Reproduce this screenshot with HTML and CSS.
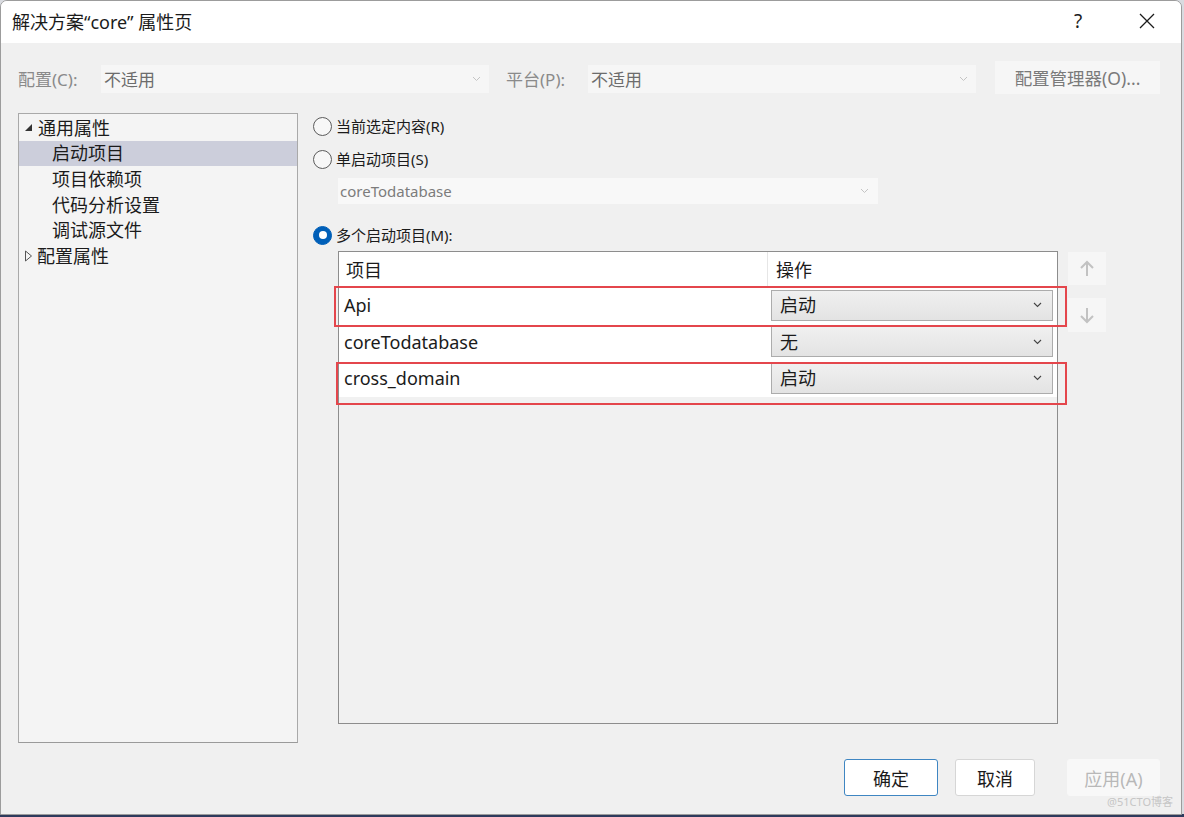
FILE: index.html
```html
<!DOCTYPE html>
<html lang="zh-CN">
<head>
<meta charset="utf-8">
<title>解决方案“core” 属性页</title>
<link rel="stylesheet" href="styles.css">
</head>
<body>
<div class="dialog">
  <div class="titlebar">
    <div class="title">解决方案“core” 属性页</div>
    <div class="title-btns">
      <span class="help">?</span>
      <span class="close"><svg width="16" height="16" viewBox="0 0 16 16"><path d="M1 1 L15 15 M15 1 L1 15" stroke="#1b1b1b" stroke-width="1.3" fill="none"/></svg></span>
    </div>
  </div>

  <div class="config-row">
    <span class="cfg-label">配置(C):</span>
    <div class="select select-disabled">
      <span>不适用</span>
      <svg class="chev" width="9" height="6" viewBox="0 0 9 6"><path d="M1 1 L4.5 4.5 L8 1" stroke="#c4c4c4" stroke-width="1" fill="none"/></svg>
    </div>
    <span class="cfg-label cfg-label-2">平台(P):</span>
    <div class="select select-disabled">
      <span>不适用</span>
      <svg class="chev" width="9" height="6" viewBox="0 0 9 6"><path d="M1 1 L4.5 4.5 L8 1" stroke="#c4c4c4" stroke-width="1" fill="none"/></svg>
    </div>
    <button class="cfg-mgr">配置管理器(O)...</button>
  </div>

  <div class="main">
    <div class="tree">
      <div class="tree-item root"><svg class="tw" width="9" height="9" viewBox="0 0 9 9"><path d="M8 1 L8 8 L1 8 Z" fill="#333"/></svg><span>通用属性</span></div>
      <div class="tree-item child selected">启动项目</div>
      <div class="tree-item child">项目依赖项</div>
      <div class="tree-item child">代码分析设置</div>
      <div class="tree-item child">调试源文件</div>
      <div class="tree-item root"><svg class="tw" width="9" height="12" viewBox="0 0 9 12"><path d="M1.5 1 L7.5 6 L1.5 11 Z" fill="none" stroke="#555" stroke-width="1"/></svg><span>配置属性</span></div>
    </div>

    <div class="right">
      <div class="radio-row">
        <span class="radio"></span>
        <span class="radio-label">当前选定内容(R)</span>
      </div>
      <div class="radio-row r2">
        <span class="radio"></span>
        <span class="radio-label">单启动项目(S)</span>
      </div>
      <div class="single-select">
        <span>coreTodatabase</span>
        <svg class="chev" width="9" height="6" viewBox="0 0 9 6"><path d="M1 1 L4.5 4.5 L8 1" stroke="#c4c4c4" stroke-width="1" fill="none"/></svg>
      </div>
      <div class="radio-row r3">
        <span class="radio checked"></span>
        <span class="radio-label">多个启动项目(M):</span>
      </div>

      <div class="table-area">
        <div class="table-wrap">
          <div class="grid">
            <div class="row head">
              <div class="c1">项目</div>
              <div class="c2 head-c2">操作</div>
            </div>
            <div class="row">
              <div class="c1">Api</div>
              <div class="c2"><div class="combo"><span>启动</span><svg width="9" height="6" viewBox="0 0 9 6"><path d="M1 1 L4.5 4.5 L8 1" stroke="#444" stroke-width="1.1" fill="none"/></svg></div></div>
            </div>
            <div class="row">
              <div class="c1">coreTodatabase</div>
              <div class="c2"><div class="combo"><span>无</span><svg width="9" height="6" viewBox="0 0 9 6"><path d="M1 1 L4.5 4.5 L8 1" stroke="#444" stroke-width="1.1" fill="none"/></svg></div></div>
            </div>
            <div class="row">
              <div class="c1">cross_domain</div>
              <div class="c2"><div class="combo"><span>启动</span><svg width="9" height="6" viewBox="0 0 9 6"><path d="M1 1 L4.5 4.5 L8 1" stroke="#444" stroke-width="1.1" fill="none"/></svg></div></div>
            </div>
          </div>
          <div class="mark mark-1"></div>
          <div class="mark mark-2"></div>
        </div>
        <div class="move-btns">
          <div class="move-btn"><svg width="16" height="18" viewBox="0 0 16 18"><path d="M8 16 L8 2 M2 8 L8 2 L14 8" stroke="#c2c2c2" stroke-width="2" fill="none"/></svg></div>
          <div class="move-btn down"><svg width="16" height="18" viewBox="0 0 16 18"><path d="M8 2 L8 16 M2 10 L8 16 L14 10" stroke="#c2c2c2" stroke-width="2" fill="none"/></svg></div>
        </div>
      </div>
    </div>
  </div>

  <div class="footer">
    <button class="btn btn-ok">确定</button>
    <button class="btn btn-cancel">取消</button>
    <button class="btn btn-apply">应用(A)</button>
  </div>
  <div class="watermark">@51CTO博客</div>
</div>
</body>
</html>
```

FILE: styles.css
```css
* { box-sizing: border-box; }

html, body {
  margin: 0;
  padding: 0;
}

body {
  width: 1184px;
  height: 817px;
  overflow: hidden;
  background: linear-gradient(#d9dbe0 0, #d9dbe0 814px, #2e3a5c 814px);
  font-family: "Noto Sans", "Noto Sans CJK SC", sans-serif;
  color: #1b1b1b;
}

.dialog {
  position: relative;
  width: 1182px;
  height: 815px;
  background: #f0f0f0;
  border: 1px solid #9c9c9c;
  border-radius: 7px 7px 0 0;
  overflow: hidden;
  display: flex;
  flex-direction: column;
}

/* Title bar */
.titlebar {
  height: 42px;
  background: #ffffff;
  display: flex;
  align-items: center;
  justify-content: space-between;
  padding-left: 11px;
}

.title {
  font-size: 18px;
  line-height: 24px;
  color: #1b1b1b;
  margin-top: -1px;
}

.title-btns {
  display: flex;
  align-items: center;
  height: 100%;
}

.help {
  font-size: 19px;
  line-height: 24px;
  width: 20px;
  text-align: center;
  margin-right: 51px;
  margin-top: -3px;
}

.close {
  display: flex;
  width: 16px;
  height: 16px;
  margin-right: 26px;
  margin-top: -2px;
}

/* Config row */
.config-row {
  display: flex;
  align-items: center;
  height: 33px;
  margin-top: 18px;
  padding-left: 17px;
}

.cfg-label {
  width: 83px;
  font-size: 17px;
  line-height: 24px;
  color: #8a8a8a;
  margin-top: 4px;
}

.cfg-label-2 {
  width: 82px;
  margin-left: 17px;
}

.select {
  width: 388px;
  height: 28px;
  margin-top: 3px;
  display: flex;
  align-items: center;
  justify-content: space-between;
  padding: 0 8px 0 3px;
  background: #f6f6f6;
  font-size: 17px;
  line-height: 24px;
  color: #6c6c6c;
}

.select span { margin-top: 1px; }
.select .chev { margin-top: 0; }

.cfg-mgr {
  margin-left: 19px;
  width: 165px;
  height: 33px;
  border: none;
  background: #f6f6f6;
  font-family: inherit;
  font-size: 17.5px;
  color: #7a7a7a;
  padding: 0;
  margin-top: 0;
}

/* Main area */
.main {
  display: flex;
  align-items: flex-start;
  margin-top: 18px;
  padding-left: 17px;
}

.tree {
  width: 280px;
  height: 630px;
  margin-top: 1px;
  background: #f4f4f4;
  border: 1px solid #a9a9a9;
  border-bottom-color: #9a9a9a;
  padding-top: 1px;
}

.tree-item {
  height: 25.6px;
  display: flex;
  align-items: center;
  font-size: 18px;
  line-height: 24px;
  white-space: nowrap;
}

.tree-item.root { padding-left: 5px; }
.tree-item.root .tw { margin-right: 5px; flex: none; }
.tree-item.root:last-child .tw { margin-right: 4px; }
.tree-item.child { padding-left: 33px; }
.tree-item.selected { background: #cccedb; }

.right {
  margin-left: 15px;
  display: flex;
  flex-direction: column;
}

.radio-row {
  display: flex;
  align-items: center;
  height: 28px;
}

.radio-row.r2 { margin-top: 5px; }
.radio-row.r3 { margin-top: 17px; }

.radio {
  width: 19px;
  height: 19px;
  border-radius: 50%;
  border: 1px solid #5b5b5b;
  background: #f7f7f7;
  margin-right: 4px;
  flex: none;
  position: relative;
}

.radio.checked {
  background: #005fb8;
  border-color: #005fb8;
}

.radio.checked::after {
  content: "";
  position: absolute;
  left: 4.5px;
  top: 4.5px;
  width: 8px;
  height: 8px;
  border-radius: 50%;
  background: #ffffff;
}

.radio-label {
  font-size: 15px;
  line-height: 20px;
  color: #1b1b1b;
  margin-top: -1px;
}

.single-select {
  margin-top: 5px;
  margin-left: 25px;
  width: 540px;
  height: 26px;
  background: #f8f8f8;
  display: flex;
  align-items: center;
  justify-content: space-between;
  padding: 0 9px 0 2px;
  font-size: 15px;
  color: #7c7c7c;
}

/* Table */
.table-area {
  display: flex;
  margin-top: 2px;
  margin-left: 25px;
}

.table-wrap {
  position: relative;
  width: 720px;
  height: 473px;
  border: 1px solid #8d8d8d;
  background: #f1f1f1;
}

.row {
  display: flex;
  height: 36.5px;
  background: #ffffff;
  font-size: 18px;
  line-height: 24px;
}

.row.head { height: 35px; }

.c1 {
  width: 429px;
  display: flex;
  align-items: center;
  padding-left: 5px;
}

.row.head .c1 {
  padding-left: 7px;
  border-right: 1px solid #e6e6e6;
}

.c2 {
  flex: 1;
  display: flex;
  align-items: center;
  padding: 0 4px 0 3px;
}

.head-c2 { padding-left: 8px; }

.combo {
  width: 100%;
  height: 31px;
  display: flex;
  align-items: center;
  justify-content: space-between;
  padding: 0 10px 0 8px;
  background: linear-gradient(#f0f0f0, #e3e3e3);
  border: 1px solid #acacac;
}

.mark {
  position: absolute;
  border: 2px solid #e4464c;
  pointer-events: none;
}

.mark-1 { left: -5px; top: 34px; width: 733px; height: 41px; }
.mark-2 { left: -3px; top: 110px; width: 731px; height: 43px; }

.move-btns {
  margin-left: 10px;
  display: flex;
  flex-direction: column;
}

.move-btn {
  width: 38px;
  height: 33px;
  margin-top: 1px;
  background: #f6f6f6;
  display: flex;
  align-items: center;
  justify-content: center;
}

.move-btn.down { margin-top: 13px; height: 34px; }

/* Footer */
.footer {
  display: flex;
  justify-content: flex-end;
  margin-top: 16px;
  padding-right: 21px;
}

.btn {
  height: 37px;
  font-family: inherit;
  font-size: 18px;
  padding: 0;
  border-radius: 3px;
  color: #1b1b1b;
}

.btn-ok {
  width: 94px;
  background: #ffffff;
  border: 1px solid #3f86c2;
}

.btn-cancel {
  width: 80px;
  margin-left: 17px;
  background: #ffffff;
  border: 1px solid #d6d6d6;
}

.btn-apply {
  width: 93px;
  margin-left: 32px;
  background: #f8f8f8;
  border: 1px solid #f8f8f8;
  color: #b8b8b8;
}

.watermark {
  position: absolute;
  right: 8px;
  bottom: 5px;
  font-size: 11px;
  color: #c6c6c6;
}
```
